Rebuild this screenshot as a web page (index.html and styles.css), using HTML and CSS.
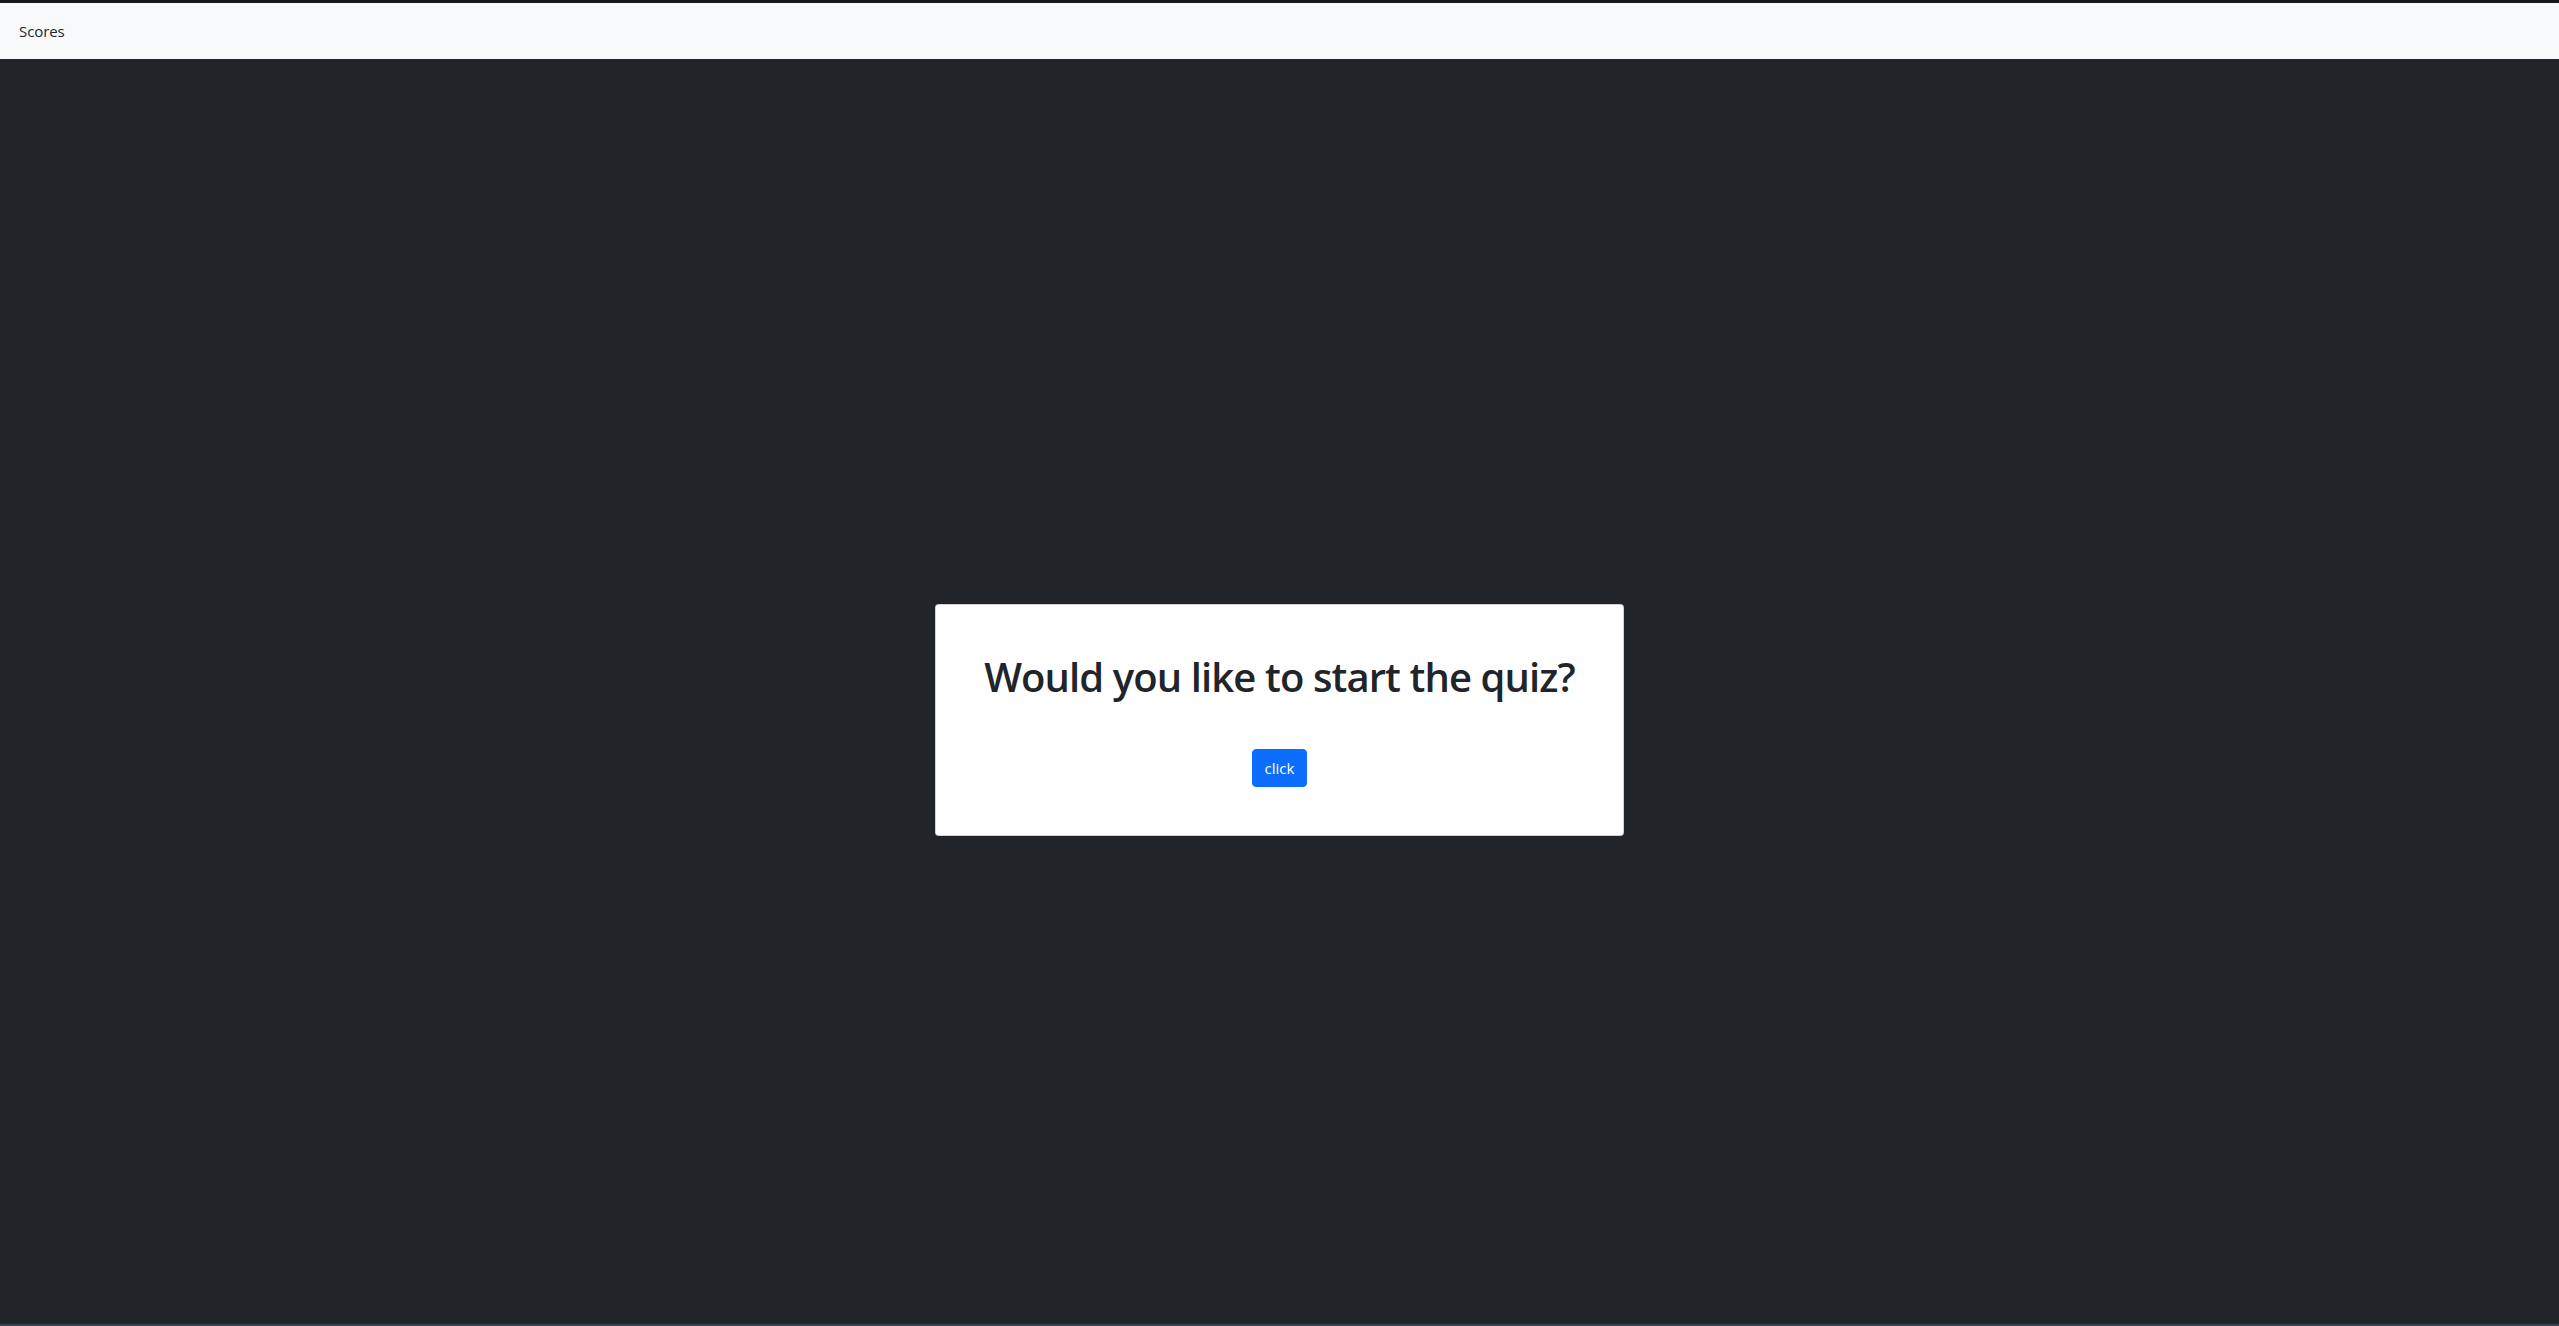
FILE: index.html
```html
<!DOCTYPE html>
<html lang="en">
<head>
<meta charset="utf-8">
<title>Quiz</title>
<link rel="stylesheet" href="styles.css">
</head>
<body>
<div class="topstrip"></div>
<nav class="navbar">
  <span class="brand">Scores</span>
</nav>
<main class="stage">
  <div class="card">
    <h1 class="title">Would you like to start the quiz?</h1>
    <button class="btn" type="button">click</button>
  </div>
</main>
</body>
</html>
```

FILE: styles.css
```css
html, body {
  margin: 0;
  padding: 0;
  height: 100%;
}
body {
  display: flex;
  flex-direction: column;
  overflow: hidden;
  background: #212529;
  font-family: "Open Sans", "Noto Sans", "Liberation Sans", sans-serif;
  color: #212529;
}
.topstrip {
  height: 3px;
  background: #17191c;
  flex: none;
}
.navbar {
  height: 56px;
  flex: none;
  background: #f8f9fa;
  display: flex;
  align-items: center;
  padding: 0 19px;
}
.brand {
  font-size: 15px;
  line-height: 24px;
  color: #212529;
  letter-spacing: -0.1px;
}
.stage {
  flex: 1;
  display: flex;
  align-items: center;
  justify-content: center;
  padding-top: 57px;
  border-bottom: 2px solid #3a414d;
}
.card {
  background: #fff;
  border: 1px solid rgba(0,0,0,0.175);
  border-radius: 4px;
  padding: 48px;
  display: flex;
  flex-direction: column;
  align-items: center;
}
.title {
  margin: 0 0 48px 0;
  font-size: 40px;
  line-height: 48px;
  font-weight: 600;
  color: #212529;
  white-space: nowrap;
  letter-spacing: -0.9px;
}
.btn {
  height: 38px;
  padding: 0 12px;
  font-family: inherit;
  font-size: 15px;
  line-height: 24px;
  color: #fff;
  background: #0d6efd;
  border: 1px solid #0d6efd;
  border-radius: 4px;
  cursor: pointer;
}
```
